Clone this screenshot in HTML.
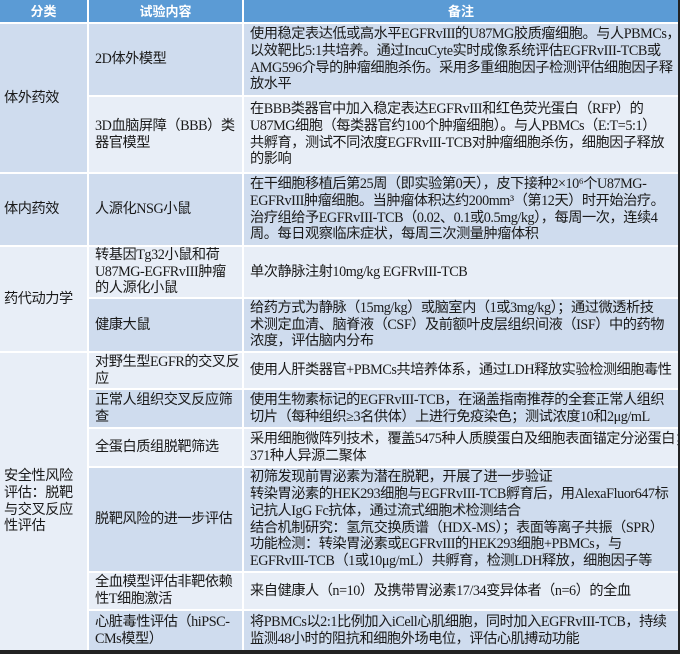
<!DOCTYPE html>
<html><head><meta charset="utf-8"><style>
*{margin:0;padding:0;box-sizing:border-box}
body{width:680px;height:654px;background:#222;overflow:hidden;position:relative;font-family:"Liberation Serif","Noto Sans CJK SC",serif;color:#1a1a1a}
.c{position:absolute;display:flex;align-items:center;padding-left:6px;font-size:14.2px;line-height:16.8px;letter-spacing:-0.45px;white-space:nowrap;overflow:hidden}
.h{background:#5b9bd5;color:#fff;justify-content:center;font-family:"Noto Sans CJK SC",sans-serif;font-weight:bold;font-size:13px;padding:0;letter-spacing:0}
.d{background:#cfdcee}.l{background:#e8eef7}
.n{padding-left:4px}
</style></head><body>
<div style="position:absolute;left:0;top:0;width:678px;height:650px;background:#fff"></div>
<div class="c h" style="left:0;top:0;width:87px;height:22px">分类</div>
<div class="c h" style="left:89px;top:0;width:153px;height:22px">试验内容</div>
<div class="c h" style="left:244px;top:0;width:434px;height:22px">备注</div>

<div class="c d n" style="left:0;top:24px;width:87px;height:148px">体外药效</div>
<div class="c d" style="left:89px;top:24px;width:153px;height:71px">2D体外模型</div>
<div class="c d" style="left:244px;top:24px;width:434px;height:71px"><div>使用稳定表达低或高水平EGFRvIII的U87MG胶质瘤细胞。与人PBMCs，<br>以效靶比5:1共培养。通过IncuCyte实时成像系统评估EGFRvIII-TCB或<br>AMG596介导的肿瘤细胞杀伤。采用多重细胞因子检测评估细胞因子释<br>放水平</div></div>
<div class="c l" style="left:89px;top:97px;width:153px;height:75px"><div>3D血脑屏障（BBB）类<br>器官模型</div></div>
<div class="c l" style="left:244px;top:97px;width:434px;height:75px"><div>在BBB类器官中加入稳定表达EGFRvIII和红色荧光蛋白（RFP）的<br>U87MG细胞（每类器官约100个肿瘤细胞）。与人PBMCs（E:T=5:1）<br>共孵育，测试不同浓度EGFRvIII-TCB对肿瘤细胞杀伤，细胞因子释放<br>的影响</div></div>

<div class="c d n" style="left:0;top:174px;width:87px;height:71px">体内药效</div>
<div class="c d" style="left:89px;top:174px;width:153px;height:71px">人源化NSG小鼠</div>
<div class="c d" style="left:244px;top:174px;width:434px;height:71px"><div>在干细胞移植后第25周（即实验第0天），皮下接种2×10⁶个U87MG-<br>EGFRvIII肿瘤细胞。当肿瘤体积达约200mm³（第12天）时开始治疗。<br>治疗组给予EGFRvIII-TCB（0.02、0.1或0.5mg/kg），每周一次，连续4<br>周。每日观察临床症状，每周三次测量肿瘤体积</div></div>

<div class="c l n" style="left:0;top:247px;width:87px;height:104px">药代动力学</div>
<div class="c l" style="left:89px;top:247px;width:153px;height:50px"><div>转基因Tg32小鼠和荷<br>U87MG-EGFRvIII肿瘤<br>的人源化小鼠</div></div>
<div class="c l" style="left:244px;top:247px;width:434px;height:50px">单次静脉注射10mg/kg EGFRvIII-TCB</div>
<div class="c d" style="left:89px;top:299px;width:153px;height:52px">健康大鼠</div>
<div class="c d" style="left:244px;top:299px;width:434px;height:52px"><div>给药方式为静脉（15mg/kg）或脑室内（1或3mg/kg）；通过微透析技<br>术测定血清、脑脊液（CSF）及前额叶皮层组织间液（ISF）中的药物<br>浓度，评估脑内分布</div></div>

<div class="c l n" style="left:0;top:353px;width:87px;height:297px"><div>安全性风险<br>评估：脱靶<br>与交叉反应<br>性评估</div></div>
<div class="c l" style="left:89px;top:353px;width:153px;height:35px"><div>对野生型EGFR的交叉反<br>应</div></div>
<div class="c l" style="left:244px;top:353px;width:434px;height:35px">使用人肝类器官+PBMCs共培养体系，通过LDH释放实验检测细胞毒性</div>
<div class="c d" style="left:89px;top:390px;width:153px;height:37px"><div>正常人组织交叉反应筛<br>查</div></div>
<div class="c d" style="left:244px;top:390px;width:434px;height:37px"><div>使用生物素标记的EGFRvIII-TCB，在涵盖指南推荐的全套正常人组织<br>切片（每种组织≥3名供体）上进行免疫染色；测试浓度10和2μg/mL</div></div>
<div class="c l" style="left:89px;top:429px;width:153px;height:37px">全蛋白质组脱靶筛选</div>
<div class="c l" style="left:244px;top:429px;width:434px;height:37px"><div>采用细胞微阵列技术，覆盖5475种人质膜蛋白及细胞表面锚定分泌蛋白；<br>371种人异源二聚体</div></div>
<div class="c d" style="left:89px;top:468px;width:153px;height:103px">脱靶风险的进一步评估</div>
<div class="c d" style="left:244px;top:468px;width:434px;height:103px"><div>初筛发现前胃泌素为潜在脱靶，开展了进一步验证<br>转染胃泌素的HEK293细胞与EGFRvIII-TCB孵育后，用AlexaFluor647标<br>记抗人IgG Fc抗体，通过流式细胞术检测结合<br>结合机制研究：氢氘交换质谱（HDX-MS）；表面等离子共振（SPR）<br>功能检测：转染胃泌素或EGFRvIII的HEK293细胞+PBMCs，与<br>EGFRvIII-TCB（1或10μg/mL）共孵育，检测LDH释放，细胞因子等</div></div>
<div class="c l" style="left:89px;top:573px;width:153px;height:36px"><div>全血模型评估非靶依赖<br>性T细胞激活</div></div>
<div class="c l" style="left:244px;top:573px;width:434px;height:36px">来自健康人（n=10）及携带胃泌素17/34变异体者（n=6）的全血</div>
<div class="c d" style="left:89px;top:611px;width:153px;height:39px"><div>心脏毒性评估（hiPSC-<br>CMs模型）</div></div>
<div class="c d" style="left:244px;top:611px;width:434px;height:39px"><div>将PBMCs以2:1比例加入iCell心肌细胞，同时加入EGFRvIII-TCB，持续<br>监测48小时的阻抗和细胞外场电位，评估心肌搏动功能</div></div>
</body></html>
